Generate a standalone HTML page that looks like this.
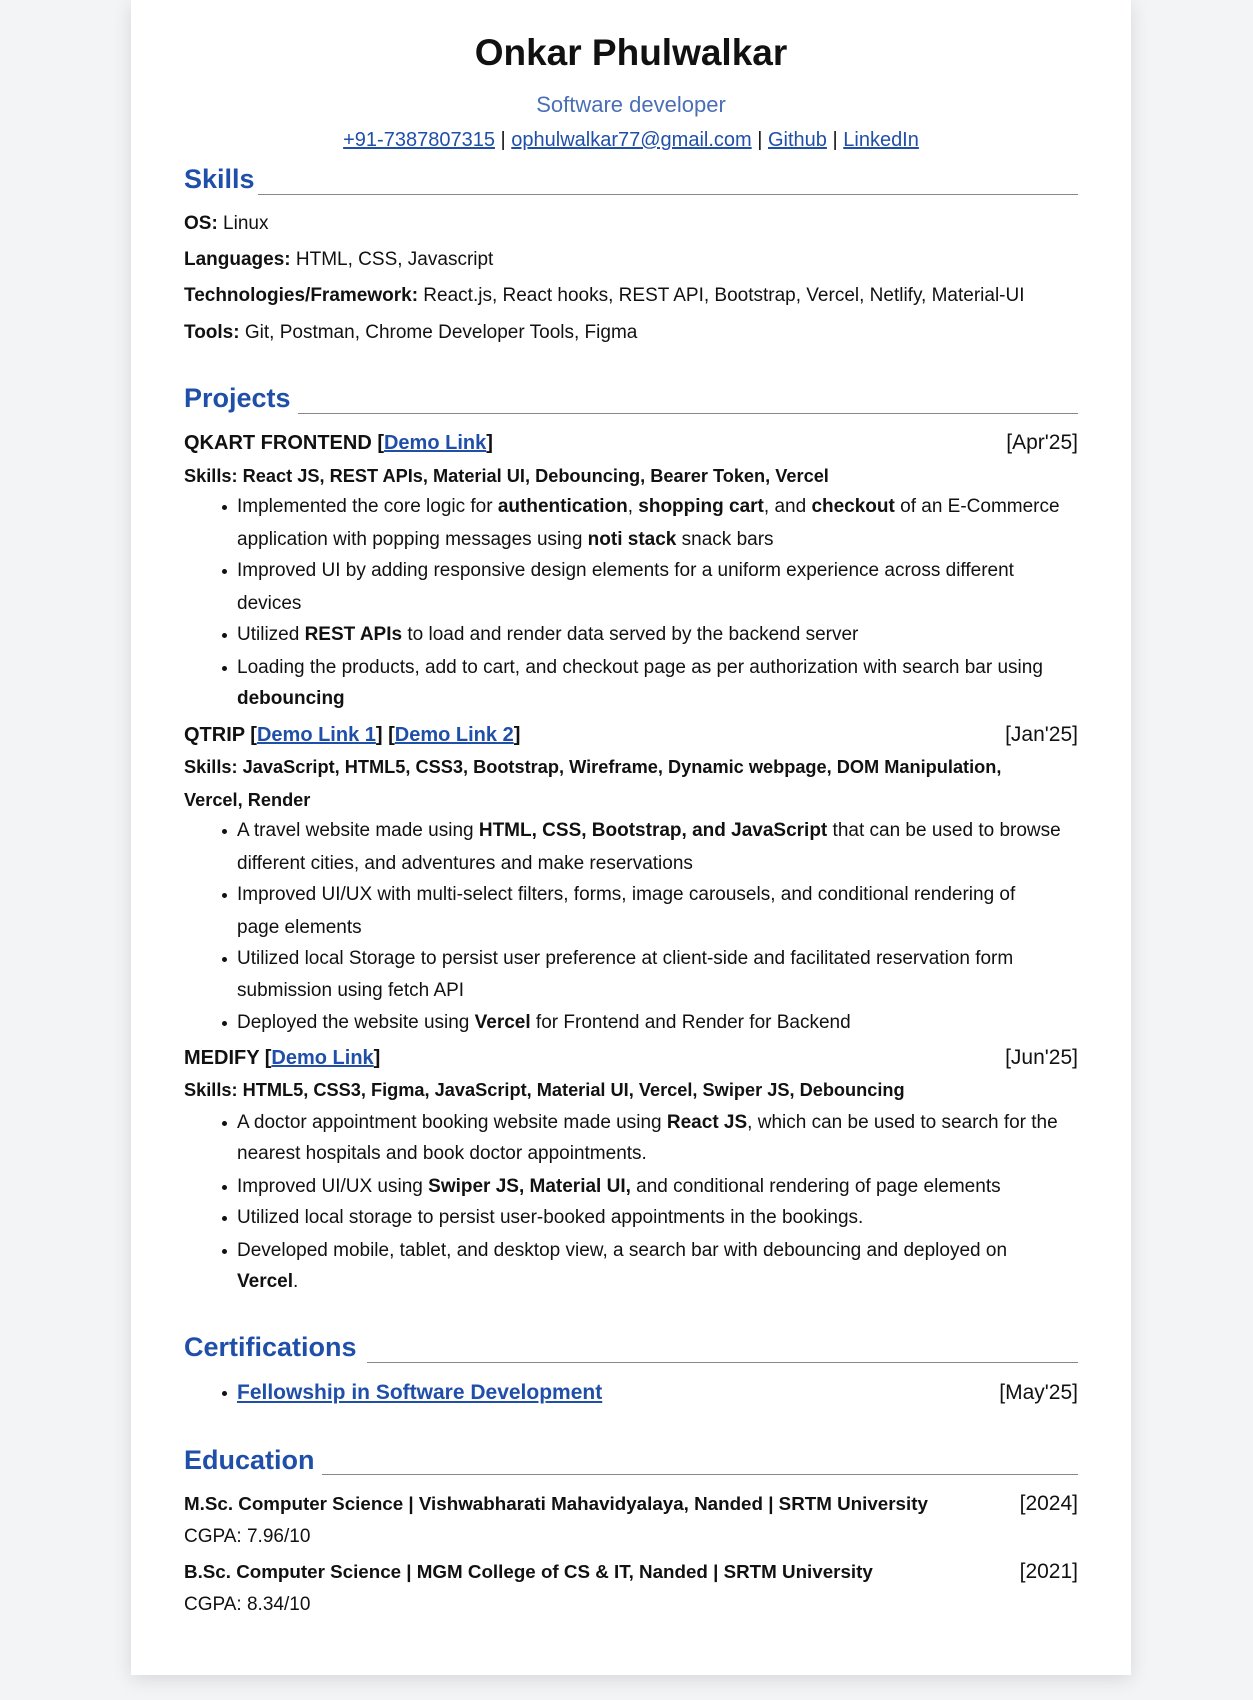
<!DOCTYPE html>
<html><head><meta charset="utf-8"><style>
html,body{margin:0;padding:0}
body{width:1253px;height:1700px;background:#f3f4f6;position:relative;overflow:hidden;font-family:"Liberation Sans",Arial,sans-serif;color:#111}
.paper{position:absolute;left:131px;top:0;width:1000px;height:1675px;background:#fff;box-shadow:0 4px 18px rgba(0,0,0,.12)}
.l{position:absolute;left:184px;height:32px;line-height:32px;white-space:nowrap;font-size:19px;margin-top:2px}
.b{left:237px}
.b::before{content:"";position:absolute;left:-15px;top:14px;width:5px;height:5px;border-radius:50%;background:#111}
.c{position:absolute;left:131px;width:1000px;text-align:center;white-space:nowrap}
.h{position:absolute;left:184px;font-size:27px;font-weight:bold;color:#1f4fa8;height:40px;line-height:40px;white-space:nowrap}
.rule{position:absolute;right:175px;height:0;border-top:1.5px solid #888}
.t{font-size:20px;font-weight:bold}
.d{position:absolute;right:175px;font-size:21px;height:32px;line-height:32px;margin-top:2px}
a{color:#1f4fa8;text-decoration:underline}
.sk{font-weight:bold;font-size:18.2px}
.ed{font-weight:bold;font-size:18.8px}
</style></head><body>
<div class="paper"></div>
<div class="c" style="top:31px;font-size:37px;font-weight:bold;line-height:44px">Onkar Phulwalkar</div>
<div class="c" style="top:92px;font-size:22px;color:#4a6fb5;line-height:26px">Software developer</div>
<div class="c" style="top:129px;font-size:20px;line-height:22px"><a>+91-7387807315</a> | <a>ophulwalkar77@gmail.com</a> | <a>Github</a> | <a>LinkedIn</a></div>

<div class="h" style="top:159px">Skills</div><div class="rule" style="top:194px;left:258px"></div>
<div class="l" style="top:206px"><b>OS:</b> Linux</div>
<div class="l" style="top:242px"><b>Languages:</b> HTML, CSS, Javascript</div>
<div class="l" style="top:278px"><b>Technologies/Framework:</b> React.js, React hooks, REST API, Bootstrap, Vercel, Netlify, Material-UI</div>
<div class="l" style="top:315px"><b>Tools:</b> Git, Postman, Chrome Developer Tools, Figma</div>

<div class="h" style="top:378px">Projects</div><div class="rule" style="top:413px;left:298px"></div>
<div class="l t" style="top:425px">QKART FRONTEND [<a>Demo Link</a>]</div><div class="d" style="top:425px">[Apr'25]</div>
<div class="l sk" style="top:458px">Skills: React JS, REST APIs, Material UI, Debouncing, Bearer Token, Vercel</div>
<div class="l b" style="top:489px">Implemented the core logic for <b>authentication</b>, <b>shopping cart</b>, and <b>checkout</b> of an E-Commerce</div>
<div class="l" style="top:522px;left:237px">application with popping messages using <b>noti stack</b> snack bars</div>
<div class="l b" style="top:553px">Improved UI by adding responsive design elements for a uniform experience across different</div>
<div class="l" style="top:586px;left:237px">devices</div>
<div class="l b" style="top:617px">Utilized <b>REST APIs</b> to load and render data served by the backend server</div>
<div class="l b" style="top:650px">Loading the products, add to cart, and checkout page as per authorization with search bar using</div>
<div class="l" style="top:681px;left:237px"><b>debouncing</b></div>

<div class="l t" style="top:717px">QTRIP [<a>Demo Link 1</a>] [<a>Demo Link 2</a>]</div><div class="d" style="top:717px">[Jan'25]</div>
<div class="l sk" style="top:749px">Skills: JavaScript, HTML5, CSS3, Bootstrap, Wireframe, Dynamic webpage, DOM Manipulation,</div>
<div class="l sk" style="top:782px">Vercel, Render</div>
<div class="l b" style="top:813px">A travel website made using <b>HTML, CSS, Bootstrap, and JavaScript</b> that can be used to browse</div>
<div class="l" style="top:846px;left:237px">different cities, and adventures and make reservations</div>
<div class="l b" style="top:877px">Improved UI/UX with multi-select filters, forms, image carousels, and conditional rendering of</div>
<div class="l" style="top:910px;left:237px">page elements</div>
<div class="l b" style="top:941px">Utilized local Storage to persist user preference at client-side and facilitated reservation form</div>
<div class="l" style="top:973px;left:237px">submission using fetch API</div>
<div class="l b" style="top:1005px">Deployed the website using <b>Vercel</b> for Frontend and Render for Backend</div>

<div class="l t" style="top:1040px">MEDIFY [<a>Demo Link</a>]</div><div class="d" style="top:1040px">[Jun'25]</div>
<div class="l sk" style="top:1072px">Skills: HTML5, CSS3, Figma, JavaScript, Material UI, Vercel, Swiper JS, Debouncing</div>
<div class="l b" style="top:1105px">A doctor appointment booking website made using <b>React JS</b>, which can be used to search for the</div>
<div class="l" style="top:1136px;left:237px">nearest hospitals and book doctor appointments.</div>
<div class="l b" style="top:1169px">Improved UI/UX using <b>Swiper JS, Material UI,</b> and conditional rendering of page elements</div>
<div class="l b" style="top:1200px">Utilized local storage to persist user-booked appointments in the bookings.</div>
<div class="l b" style="top:1233px">Developed mobile, tablet, and desktop view, a search bar with debouncing and deployed on</div>
<div class="l" style="top:1264px;left:237px"><b>Vercel</b>.</div>

<div class="h" style="top:1327px">Certifications</div><div class="rule" style="top:1362px;left:367px"></div>
<div class="l b t" style="top:1375px;font-size:21px"><a>Fellowship in Software Development</a></div><div class="d" style="top:1375px">[May'25]</div>

<div class="h" style="top:1440px">Education</div><div class="rule" style="top:1474px;left:322px"></div>
<div class="l ed" style="top:1486px">M.Sc. Computer Science | Vishwabharati Mahavidyalaya, Nanded | SRTM University</div><div class="d" style="top:1486px">[2024]</div>
<div class="l" style="top:1519px">CGPA: 7.96/10</div>
<div class="l ed" style="top:1554px">B.Sc. Computer Science | MGM College of CS &amp; IT, Nanded | SRTM University</div><div class="d" style="top:1554px">[2021]</div>
<div class="l" style="top:1587px">CGPA: 8.34/10</div>
</body></html>
